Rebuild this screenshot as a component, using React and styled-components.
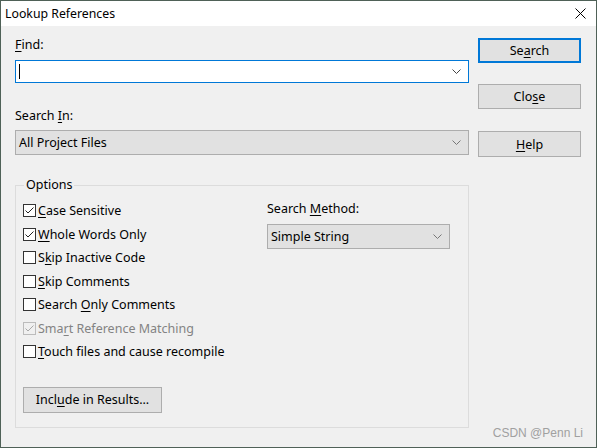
import React from "react";
import styled, { createGlobalStyle } from "styled-components";

const Global = createGlobalStyle`
  html, body { margin: 0; padding: 0; background: #f0f0f0; }
  body { font-family: "Noto Sans", "Liberation Sans", sans-serif; }
`;

const Window = styled.div`
  position: relative;
  width: 597px;
  height: 448px;
  box-sizing: border-box;
  border: 1px solid #4f6157;
  background: #f0f0f0;
  display: flex;
  flex-direction: column;
  font-family: "Noto Sans", "Liberation Sans", sans-serif;
  font-size: 12.5px;
  color: #000;
`;

const TitleBar = styled.div`
  height: 25px;
  background: #fff;
  display: flex;
  align-items: center;
  justify-content: space-between;
  padding: 0 10px 0 4px;
  font-size: 12.3px;
`;

const CloseX = styled.svg`
  width: 11px;
  height: 11px;
`;

const Body = styled.div`
  flex: 1;
  display: flex;
  padding: 0 15px 0 14px;
  gap: 9px;
`;

const LeftCol = styled.div`
  width: 454px;
  display: flex;
  flex-direction: column;
`;

const RightCol = styled.div`
  width: 103px;
  display: flex;
  flex-direction: column;
`;

const Label = styled.div`
  line-height: 16px;
  height: 16px;
  margin-top: ${(p) => p.$mt || 0}px;
`;

const U = styled.span`
  text-decoration: underline;
  text-underline-offset: 2px;
`;

const Input = styled.div`
  margin-top: 7px;
  height: 23px;
  box-sizing: border-box;
  border: 1px solid #0078d7;
  background: #fff;
  display: flex;
  align-items: center;
  justify-content: space-between;
  padding: 0 7px 0 3px;
`;

const Caret = styled.span`
  width: 1px;
  height: 15px;
  background: #000;
`;

const Combo = styled.div`
  margin-top: ${(p) => p.$mt || 0}px;
  width: ${(p) => (p.$w ? p.$w + "px" : "auto")};
  height: ${(p) => p.$h || 25}px;
  box-sizing: border-box;
  border: 1px solid #adadad;
  background: #e1e1e1;
  display: flex;
  align-items: center;
  justify-content: space-between;
  padding: 0 7px 0 3px;
`;

const Chevron = ({ color = "#555" }) => (
  <svg width="9" height="5" viewBox="0 0 9 5">
    <polyline points="0.5,0.5 4.5,4.5 8.5,0.5" fill="none" stroke={color} strokeWidth="1" />
  </svg>
);

const Group = styled.fieldset`
  margin: 22px 0 0 0;
  height: 251px;
  box-sizing: border-box;
  border: 1px solid #dcdcdc;
  padding: 6px 0 0 7px;
  display: flex;
`;

const Legend = styled.legend`
  padding: 0 2px;
  margin-left: 1px;
  line-height: 16px;
`;

const GroupInner = styled.div`
  display: flex;
  width: 100%;
`;

const CheckCol = styled.div`
  width: 244px;
  display: flex;
  flex-direction: column;
`;

const Row = styled.div`
  height: 23.5px;
  display: flex;
  align-items: center;
  gap: 2px;
  color: ${(p) => (p.$disabled ? "#838383" : "#000")};
`;

const Box = styled.span`
  width: 13px;
  height: 13px;
  box-sizing: border-box;
  border: 1px solid ${(p) => (p.$disabled ? "#bcbcbc" : "#333")};
  background: ${(p) => (p.$disabled ? "#f0f0f0" : "#fff")};
  display: flex;
  align-items: center;
  justify-content: center;
`;

const Check = ({ checked, disabled, children }) => (
  <Row $disabled={disabled}>
    <Box $disabled={disabled}>
      {checked && (
        <svg width="11" height="11" viewBox="0 0 11 11">
          <polyline
            points="1.5,5.5 4,8 9.5,2.5"
            fill="none"
            stroke={disabled ? "#a8a8a8" : "#222"}
            strokeWidth="1"
          />
        </svg>
      )}
    </Box>
    <span>{children}</span>
  </Row>
);

const MethodCol = styled.div`
  display: flex;
  flex-direction: column;
`;

const Button = styled.div`
  width: ${(p) => p.$w || 103}px;
  height: ${(p) => p.$h || 25}px;
  margin-top: ${(p) => p.$mt || 0}px;
  box-sizing: border-box;
  border: ${(p) => (p.$default ? "2px solid #0078d7" : "1px solid #adadad")};
  background: #e1e1e1;
  display: flex;
  align-items: center;
  justify-content: center;
`;

const Watermark = styled.div`
  position: absolute;
  right: 13px;
  bottom: 7px;
  font-family: "Liberation Sans", sans-serif;
  font-size: 12px;
  color: #a0a0a0;
`;

export default function App() {
  return (
    <>
      <Global />
      <Window>
        <TitleBar>
          <span>Lookup References</span>
          <CloseX viewBox="0 0 11 11">
            <path d="M0.5 0.5 L10.5 10.5 M10.5 0.5 L0.5 10.5" stroke="#000" strokeWidth="1" />
          </CloseX>
        </TitleBar>
        <Body>
          <LeftCol>
            <Label $mt={11}>
              <U>F</U>ind:
            </Label>
            <Input>
              <Caret />
              <Chevron color="#444" />
            </Input>
            <Label $mt={25}>
              Search <U>I</U>n:
            </Label>
            <Combo $mt={6}>
              <span>All Project Files</span>
              <Chevron color="#777" />
            </Combo>
            <Group>
              <Legend>Options</Legend>
              <GroupInner>
                <CheckCol>
                  <Check checked>
                    <U>C</U>ase Sensitive
                  </Check>
                  <Check checked>
                    <U>W</U>hole Words Only
                  </Check>
                  <Check>
                    S<U>k</U>ip Inactive Code
                  </Check>
                  <Check>
                    <U>S</U>kip Comments
                  </Check>
                  <Check>
                    Search <U>O</U>nly Comments
                  </Check>
                  <Check checked disabled>
                    Sma<U>r</U>t Reference Matching
                  </Check>
                  <Check>
                    <U>T</U>ouch files and cause recompile
                  </Check>
                  <Button $w={139} $h={26} $mt={23}>
                    <span>
                      Incl<U>u</U>de in Results...
                    </span>
                  </Button>
                </CheckCol>
                <MethodCol>
                  <Label $mt={2}>
                    Search <U>M</U>ethod:
                  </Label>
                  <Combo $mt={7} $w={183} $h={25}>
                    <span>Simple String</span>
                    <Chevron color="#777" />
                  </Combo>
                </MethodCol>
              </GroupInner>
            </Group>
          </LeftCol>
          <RightCol>
            <Button $default $mt={12}>
              <span>
                Se<U>a</U>rch
              </span>
            </Button>
            <Button $mt={21}>
              <span>
                Clo<U>s</U>e
              </span>
            </Button>
            <Button $mt={22} $h={26}>
              <span>
                <U>H</U>elp
              </span>
            </Button>
          </RightCol>
        </Body>
        <Watermark>CSDN @Penn Li</Watermark>
      </Window>
    </>
  );
}
